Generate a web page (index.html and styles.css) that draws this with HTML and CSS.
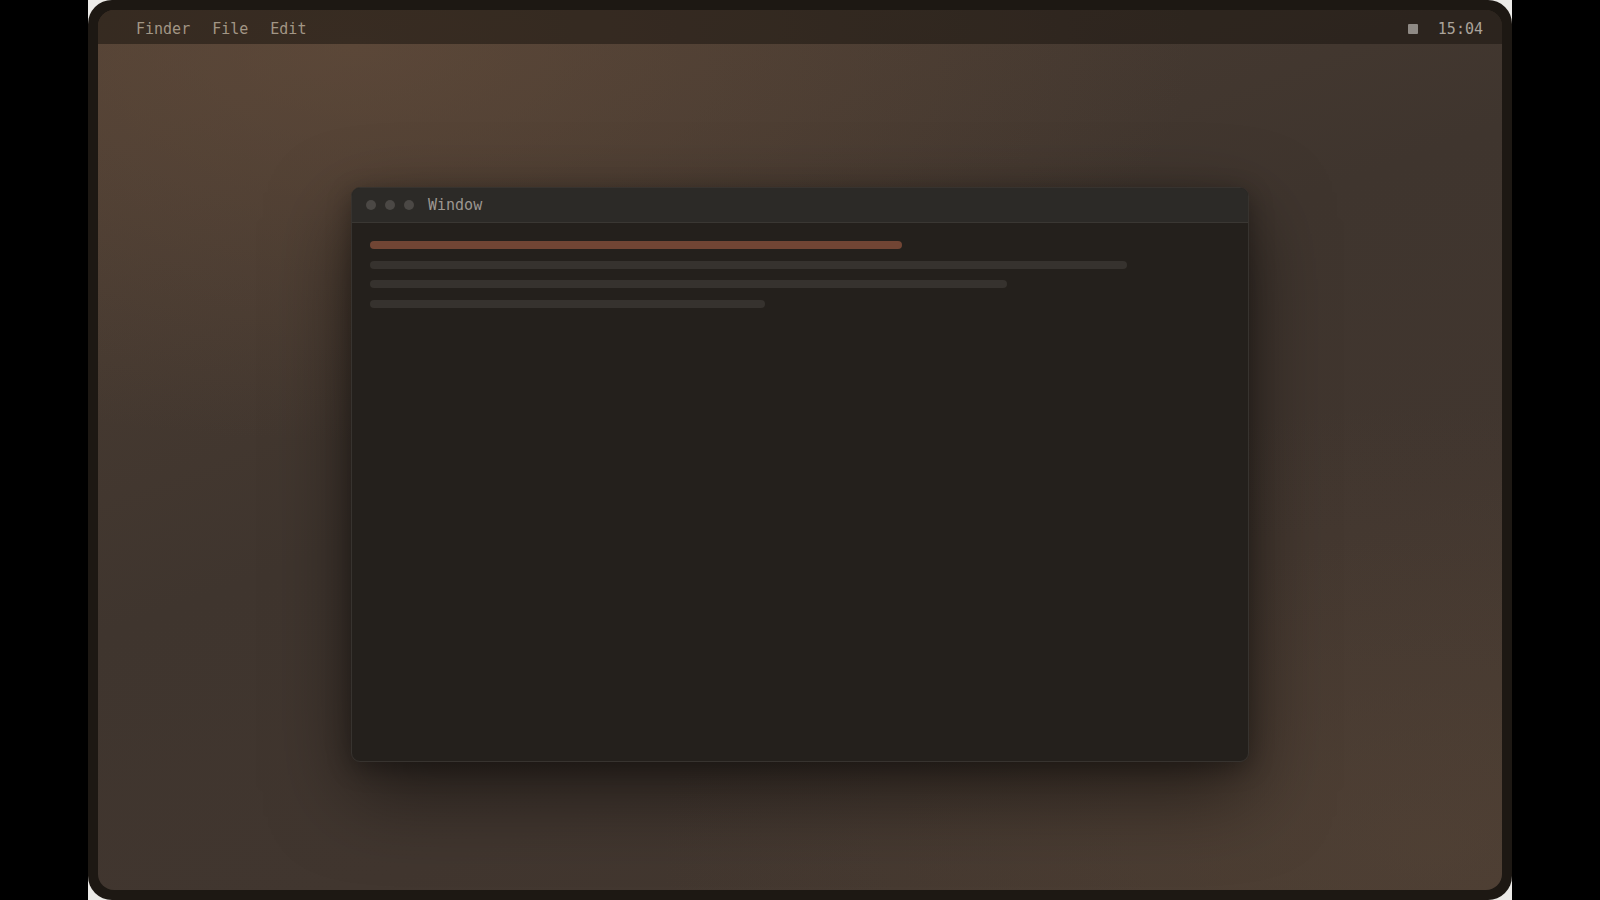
FILE: index.html
```html
<!DOCTYPE html>
<html lang="en">
<head>
<meta charset="utf-8">
<title>Desktop</title>
<link rel="stylesheet" href="styles.css">
</head>
<body>
<div class="stage">
  <div class="device">
    <div class="screen">
      <div class="menubar">
        <div class="menu-left">
          <span class="menu-item">Finder</span>
          <span class="menu-item">File</span>
          <span class="menu-item">Edit</span>
        </div>
        <div class="menu-right">
          <span class="status-square"></span>
          <span class="clock">15:04</span>
        </div>
      </div>
      <div class="desktop">
        <div class="window">
          <div class="titlebar">
            <div class="lights">
              <span class="light"></span>
              <span class="light"></span>
              <span class="light"></span>
            </div>
            <span class="title">Window</span>
          </div>
          <div class="content">
            <div class="bar bar-accent" style="width:532px"></div>
            <div class="bar" style="width:757px"></div>
            <div class="bar" style="width:637px"></div>
            <div class="bar" style="width:395px"></div>
          </div>
        </div>
      </div>
    </div>
  </div>
</div>
</body>
</html>
```

FILE: styles.css
```css
html, body {
  margin: 0;
  padding: 0;
  background: #000;
  height: 100%;
}

.stage {
  width: 1424px;
  height: 900px;
  margin: 0 auto;
  background: #ecebe8;
}

.device {
  height: 100%;
  box-sizing: border-box;
  padding: 10px;
  background: #1d1813;
  border-radius: 24px;
}

.screen {
  height: 100%;
  border-radius: 16px;
  overflow: hidden;
  display: flex;
  flex-direction: column;
  background:
    radial-gradient(ellipse 60% 45% at 18% 4%, rgba(108, 82, 62, 0.5), rgba(108, 82, 62, 0) 100%),
    radial-gradient(ellipse 55% 50% at 95% 95%, rgba(92, 72, 56, 0.4), rgba(92, 72, 56, 0) 100%),
    linear-gradient(160deg, #4d3e33 0%, #3f352e 45%, #41362f 70%, #463a31 100%);
  font-family: "DejaVu Sans Mono", "Liberation Mono", monospace;
}

.menubar {
  height: 34px;
  box-sizing: border-box;
  padding: 4px 19px 0 38px;
  flex: none;
  display: flex;
  align-items: center;
  justify-content: space-between;
  background: rgba(28, 22, 16, 0.55);
  font-size: 15px;
}

.menu-left {
  display: flex;
  gap: 22px;
}

.menu-item {
  color: #a29685;
}

.menu-right {
  display: flex;
  align-items: center;
  gap: 20px;
}

.status-square {
  width: 10px;
  height: 10px;
  background: #8f8a85;
  border-radius: 1px;
}

.clock {
  color: #aaa39b;
}

.desktop {
  flex: 1;
  display: flex;
  justify-content: center;
  align-items: flex-start;
  padding-top: 143px;
}

.window {
  width: 898px;
  height: 575px;
  box-sizing: border-box;
  border-radius: 9px;
  overflow: hidden;
  background: #24201c;
  border: 1px solid #37332f;
  box-shadow: 0 30px 80px rgba(0, 0, 0, 0.5), 0 6px 24px rgba(0, 0, 0, 0.3);
  display: flex;
  flex-direction: column;
}

.titlebar {
  height: 34px;
  flex: none;
  display: flex;
  align-items: center;
  padding-left: 14px;
  gap: 14px;
  background: #2c2a27;
  border-bottom: 1px solid #3a3733;
  font-size: 15px;
}

.lights {
  display: flex;
  gap: 9px;
}

.light {
  width: 10px;
  height: 10px;
  border-radius: 50%;
  background: #4b4845;
}

.title {
  color: #9d9791;
}

.content {
  padding: 18px 18px;
  display: flex;
  flex-direction: column;
  gap: 11.5px;
}

.bar {
  height: 8px;
  border-radius: 4px;
  background: #36322e;
}

.bar-accent {
  background: #714534;
}
```
